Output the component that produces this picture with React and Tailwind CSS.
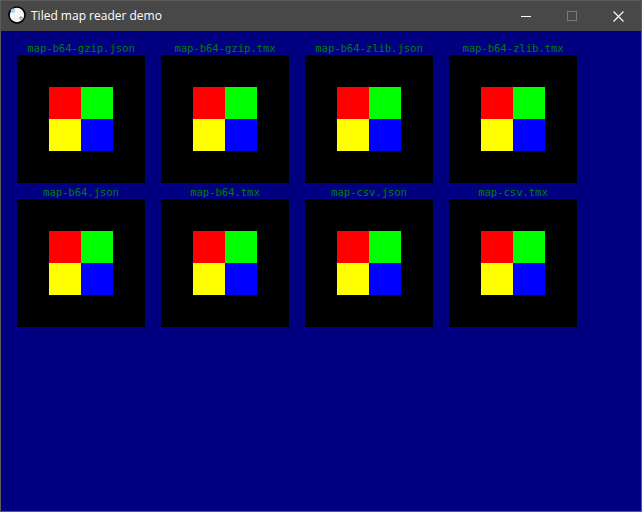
import React from "react";

const maps = [
  "map-b64-gzip.json",
  "map-b64-gzip.tmx",
  "map-b64-zlib.json",
  "map-b64-zlib.tmx",
  "map-b64.json",
  "map-b64.tmx",
  "map-csv.json",
  "map-csv.tmx",
];

const AppIcon = () => (
  <svg width="18" height="18" viewBox="0 0 18 18">
    <circle cx="9" cy="9" r="8" fill="#f6f6f6" stroke="#000" strokeWidth="1.6" />
    <circle cx="5" cy="4.8" r="2.2" fill="#9fd8ee" />
    <circle cx="13" cy="12" r="1.3" fill="none" stroke="#8a8a8a" strokeWidth="0.9" />
  </svg>
);

const MapTile = ({ name }) => (
  <div className="flex flex-col items-center">
    <div
      className="h-4 w-full text-center text-[10.5px] leading-[18px] text-[#008000] whitespace-nowrap"
      style={{ fontFamily: '"DejaVu Sans Mono", monospace' }}
    >
      {name}
    </div>
    <div className="w-32 h-32 bg-black flex items-center justify-center">
      <div className="grid grid-cols-2 w-16 h-16">
        <div className="bg-[#ff0000]" />
        <div className="bg-[#00ff00]" />
        <div className="bg-[#ffff00]" />
        <div className="bg-[#0000ff]" />
      </div>
    </div>
  </div>
);

export default function App() {
  return (
    <div className="w-[642px] h-[512px] flex flex-col border border-[#5c5c5c] bg-[#000080]">
      <div className="h-[30px] bg-[#484848] flex items-center shrink-0">
        <div className="pl-[7px] pr-[5px] pb-[2px] flex items-center">
          <AppIcon />
        </div>
        <span
          className="text-white text-[12px]"
          style={{ fontFamily: '"Open Sans", "Noto Sans", sans-serif' }}
        >
          Tiled map reader demo
        </span>
        <div className="ml-auto flex h-full">
          <div className="w-[46px] flex items-center justify-center">
            <div className="w-[10px] h-px bg-white" />
          </div>
          <div className="w-[46px] flex items-center justify-center">
            <div className="w-[10px] h-[10px] border border-[#7a7a7a]" />
          </div>
          <div className="w-[46px] flex items-center justify-center">
            <svg width="11" height="11" viewBox="0 0 11 11">
              <path d="M0.5 0.5 L10.5 10.5 M10.5 0.5 L0.5 10.5" stroke="#fff" strokeWidth="1.1" />
            </svg>
          </div>
        </div>
      </div>
      <div className="flex-1 pt-2 pl-4">
        <div className="grid grid-cols-[repeat(4,128px)] gap-x-4">
          {maps.map((m) => (
            <MapTile key={m} name={m} />
          ))}
        </div>
      </div>
    </div>
  );
}
